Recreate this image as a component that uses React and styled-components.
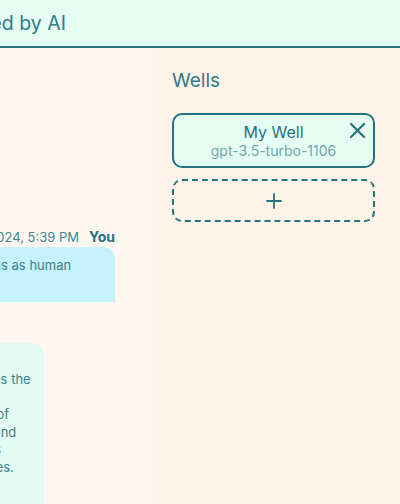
import React from 'react';
import styled, { createGlobalStyle } from 'styled-components';

const teal = '#26737f';

const GlobalStyle = createGlobalStyle`
  html, body {
    margin: 0;
    padding: 0;
    background: #fff8f0;
  }
  * {
    box-sizing: border-box;
  }
  body {
    font-family: Inter, 'Noto Sans', sans-serif;
    color: ${teal};
  }
`;

const Shell = styled.div`
  display: flex;
  flex-direction: column;
  height: 100vh;
  overflow: hidden;
`;

const Header = styled.header`
  flex: none;
  height: 48px;
  display: flex;
  align-items: center;
  background: #e6fdf4;
  border-bottom: 2px solid ${teal};
  overflow: hidden;
`;

const Title = styled.h1`
  flex: none;
  width: 266px;
  margin: 0 0 0 -200px;
  text-align: right;
  white-space: nowrap;
  font-size: 19.5px;
  font-weight: 400;
  color: #2e7c88;
`;

const Body = styled.div`
  flex: 1;
  min-height: 0;
  display: grid;
  grid-template-columns: 152px 1fr;
`;

const ChatPane = styled.section`
  overflow: hidden;
  background: #fff8f0;
`;

const ChatInner = styled.div`
  width: 400px;
  margin-left: -248px;
  padding: 180px 37px 0 20px;
  display: flex;
  flex-direction: column;
`;

const MetaRow = styled.div`
  display: flex;
  justify-content: ${(p) => (p.$mine ? 'flex-end' : 'flex-start')};
  align-items: baseline;
  gap: 10px;
  height: 18px;
  white-space: nowrap;
`;

const Stamp = styled.span`
  font-size: 13px;
  color: #3d8791;
`;

const Author = styled.span`
  font-size: 14px;
  font-weight: 700;
  color: ${teal};
`;

const Bubble = styled.div`
  align-self: ${(p) => (p.$mine ? 'flex-end' : 'flex-start')};
  width: ${(p) => p.$width}px;
  margin-top: ${(p) => p.$gap || 0}px;
  padding: 10px 14px;
  background: ${(p) => (p.$mine ? '#c5f2fe' : '#e3fcf3')};
  border-radius: 12px 12px 0 12px;
  font-size: 13px;
  line-height: 17.6px;
  color: #3f7f88;
  white-space: pre;
  overflow: hidden;
`;

const Spacer = styled.div`
  height: ${(p) => p.$h}px;
  flex: none;
`;

const Sidebar = styled.aside`
  background: #fdf3e7;
  padding: 20px 25px 0 20px;
`;

const SideTitle = styled.h2`
  margin: 0 0 19px;
  font-size: 19px;
  line-height: 26px;
  font-weight: 400;
  color: #2e7c88;
`;

const WellList = styled.div`
  display: flex;
  flex-direction: column;
  gap: 11px;
`;

const WellCard = styled.div`
  position: relative;
  height: 55px;
  border: 2px solid ${teal};
  border-radius: 10px;
  background: #e6fdf4;
  display: flex;
  flex-direction: column;
  align-items: center;
  justify-content: center;
`;

const WellName = styled.div`
  font-size: 16px;
  line-height: 20px;
  color: ${teal};
`;

const WellModel = styled.div`
  font-size: 14px;
  line-height: 18px;
  color: #6fa7ab;
`;

const CloseButton = styled.button`
  position: absolute;
  top: 6px;
  right: 6px;
  width: 19px;
  height: 19px;
  padding: 0;
  border: 0;
  background: none;
  display: flex;
  align-items: center;
  justify-content: center;
  cursor: pointer;
`;

const AddWell = styled.button`
  height: 43px;
  border: 2px dashed ${teal};
  border-radius: 10px;
  background: transparent;
  display: flex;
  align-items: center;
  justify-content: center;
  cursor: pointer;
`;

const wells = [{ id: 1, name: 'My Well', model: 'gpt-3.5-turbo-1106' }];

const userText = ['Explain how models read strings as human', 'language might.'].join('\n');

const aiText = [
  'Models read text as tokens.',
  'It then reads them all and it guesses the',
  'next most likely token.',
  'It learned this from large amounts of',
  'written text so it picks up on tone and',
  'grammar, even though what it sees',
  'numbers, and patterns in sequences.',
  'That is why it can sound human.',
  'Ask me more.',
].join('\n');

function Close() {
  return (
    <svg width="17" height="17" viewBox="0 0 17 17">
      <path d="M2 2L15 15M15 2L2 15" stroke={teal} strokeWidth="2.2" strokeLinecap="round" />
    </svg>
  );
}

function Plus() {
  return (
    <svg width="16" height="16" viewBox="0 0 16 16">
      <path d="M8 1V15M1 8H15" stroke={teal} strokeWidth="1.8" strokeLinecap="round" />
    </svg>
  );
}

export default function App() {
  return (
    <Shell>
      <GlobalStyle />
      <Header>
        <Title>Wells, powered by AI</Title>
      </Header>
      <Body>
        <ChatPane>
          <ChatInner>
            <MetaRow $mine>
              <Stamp>1/18/2024, 5:39 PM</Stamp>
              <Author>You</Author>
            </MetaRow>
            <Bubble $mine $width={320} $gap={1}>
              {userText}
            </Bubble>
            <Spacer $h={11} />
            <MetaRow>
              <Author>My Well</Author>
              <Stamp>1/18/2024, 5:39 PM</Stamp>
            </MetaRow>
            <Bubble $width={272} $gap={12}>
              {aiText}
            </Bubble>
          </ChatInner>
        </ChatPane>
        <Sidebar>
          <SideTitle>Wells</SideTitle>
          <WellList>
            {wells.map((well) => (
              <WellCard key={well.id}>
                <WellName>{well.name}</WellName>
                <WellModel>{well.model}</WellModel>
                <CloseButton aria-label="Remove well">
                  <Close />
                </CloseButton>
              </WellCard>
            ))}
            <AddWell aria-label="Add well">
              <Plus />
            </AddWell>
          </WellList>
        </Sidebar>
      </Body>
    </Shell>
  );
}
